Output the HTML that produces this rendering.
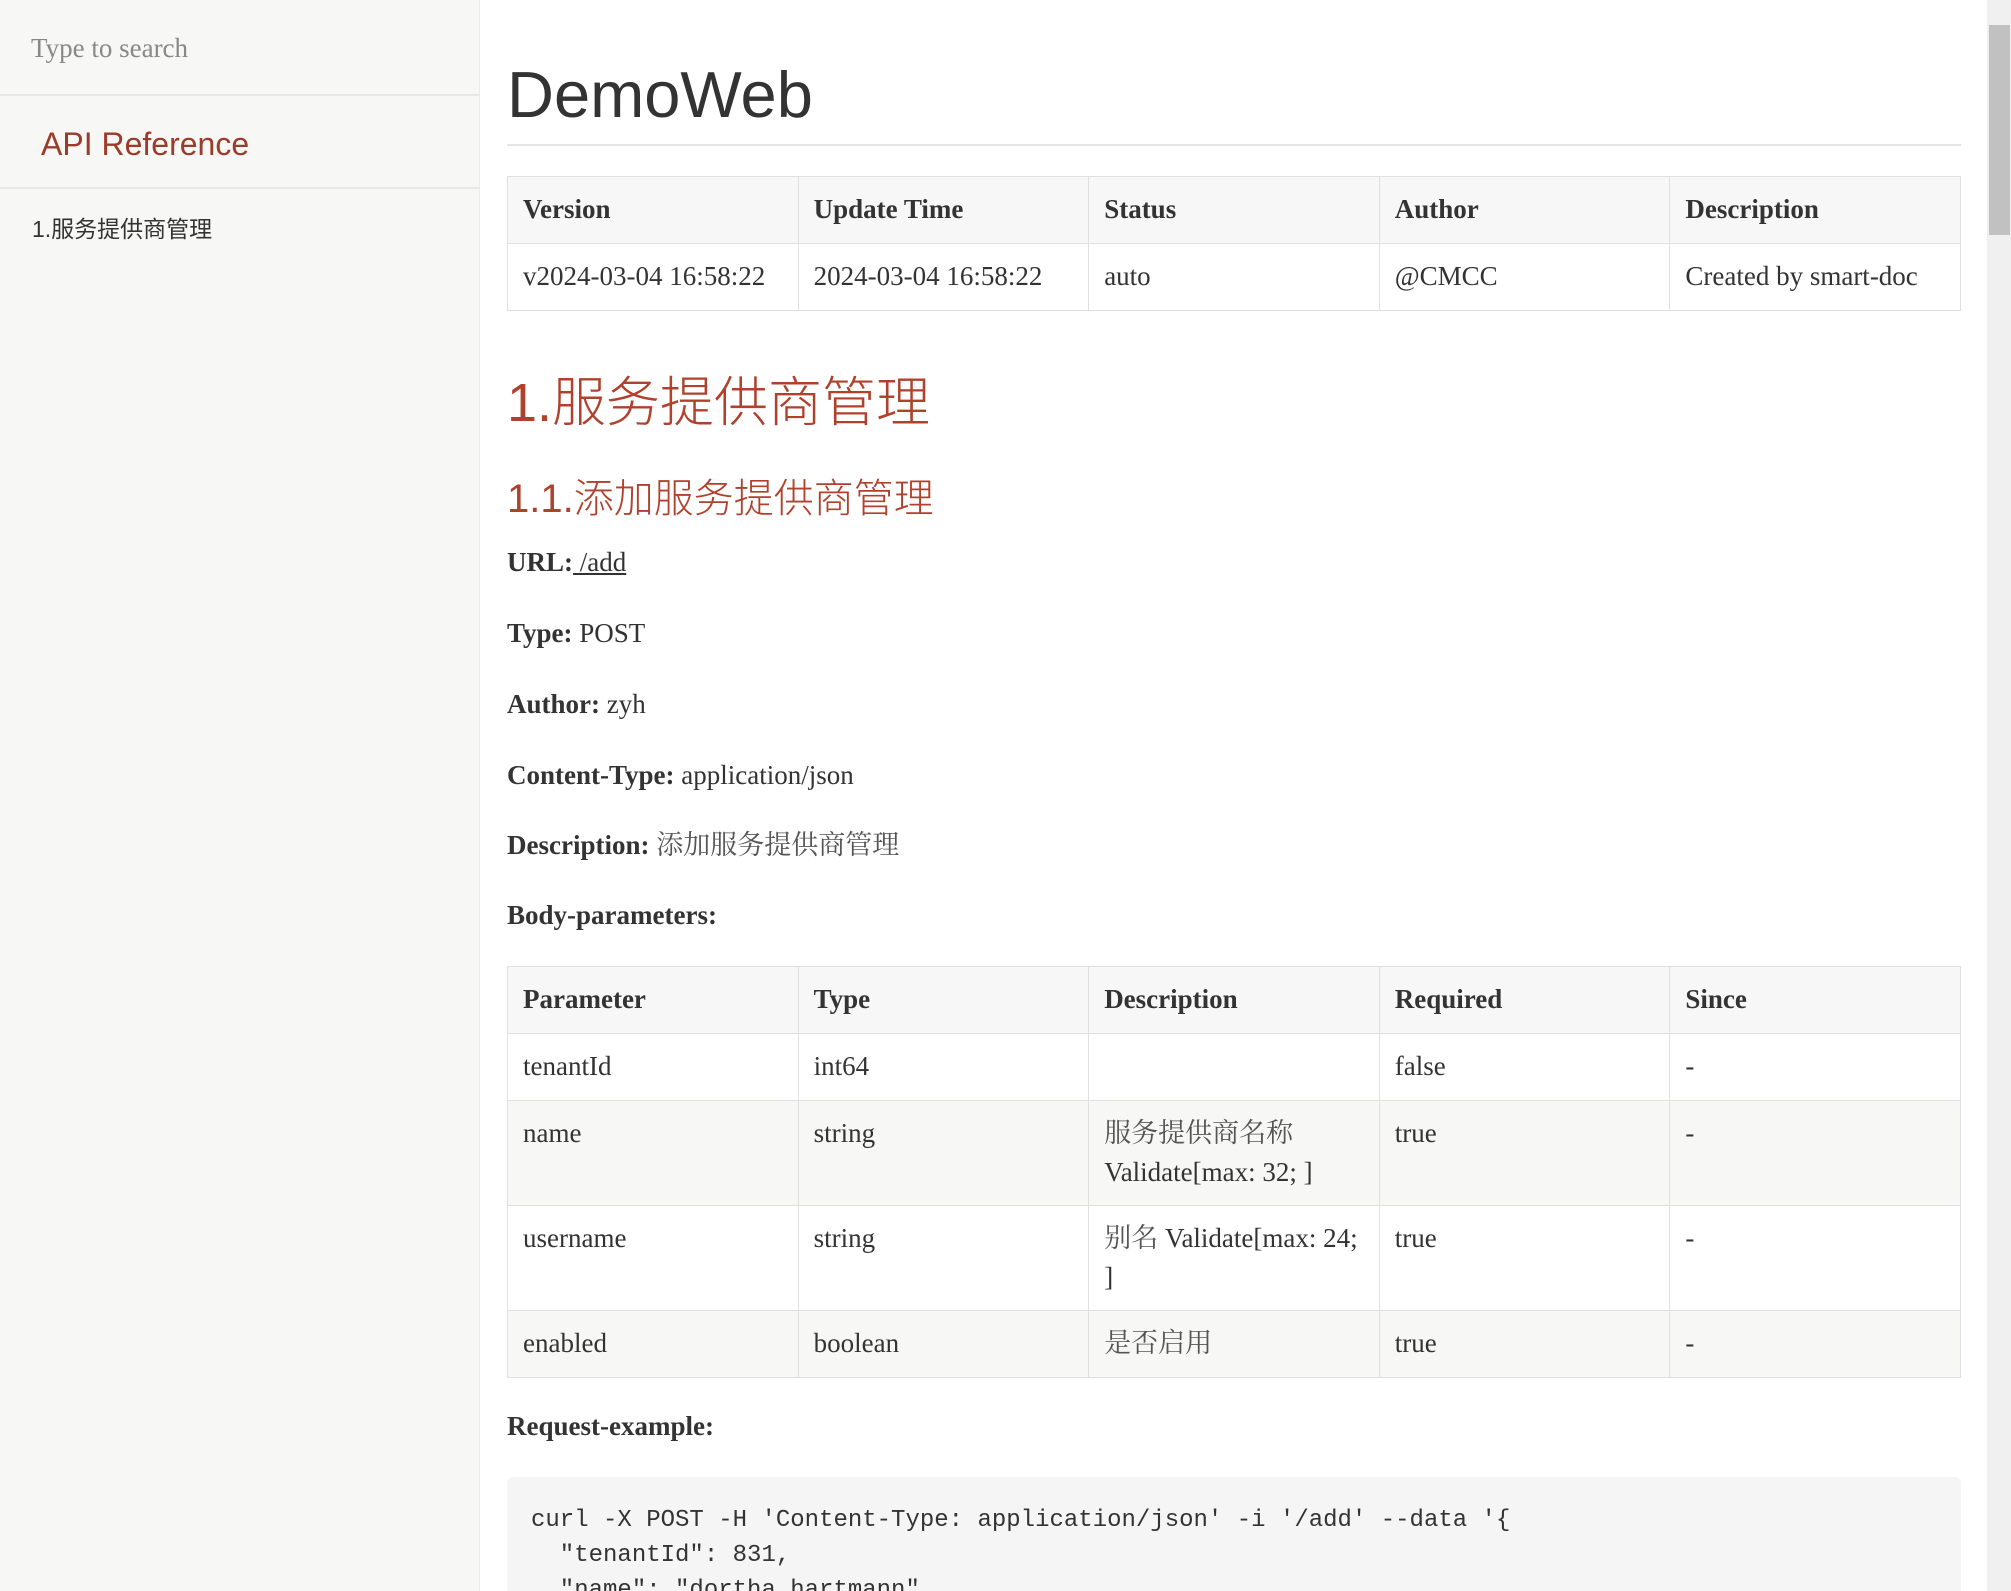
<!DOCTYPE html>
<html><head><meta charset="utf-8"><style>
*{margin:0;padding:0;box-sizing:border-box}
html,body{width:2011px;height:1591px;overflow:hidden;background:#fff;color:#333}
body{position:relative;font-family:"Liberation Serif","Noto Serif CJK SC",serif}
.side{position:absolute;left:0;top:0;width:480px;height:1591px;background:#f7f7f5;border-right:1px solid #ececea}
.search{position:absolute;left:31px;top:33px;font-size:27px;color:#888}
.hr1{position:absolute;left:0;top:94px;width:480px;border-top:2px solid #e8e8e6}
.api{position:absolute;left:41px;top:126px;font-family:"Liberation Sans",sans-serif;font-size:32px;color:#9b3b2a;font-weight:300}
.hr2{position:absolute;left:0;top:187px;width:480px;border-top:2px solid #e8e8e6}
.nav{position:absolute;left:32px;top:210px;font-family:"Liberation Sans","Noto Sans CJK SC",sans-serif;font-size:23px;color:#333}
.main{position:absolute;left:507px;top:0;width:1454px}
.ab{position:absolute;left:0}
h1.t{font-family:"Liberation Sans",sans-serif;font-weight:400;font-size:65px;color:#333;top:57px}
.hr3{top:144px;width:1454px;border-top:2px solid #e5e5e3}
table{border-collapse:collapse;width:1454px;table-layout:fixed;font-size:27px}
td,th{border:1.5px solid #e0e0e0;padding:0 15px;text-align:left;vertical-align:top}
th{background:#f7f7f7;font-weight:bold;height:67px;vertical-align:middle;padding-bottom:2px}
td{height:67px;padding-top:13px;line-height:39px}
tr.s td{background:#f7f7f5}
.cn{color:#555}
.h1c{font-family:"Liberation Sans","Noto Sans CJK SC",sans-serif;font-weight:300;color:#b0412c;font-size:54px;top:358px}
.h2c{font-family:"Liberation Sans","Noto Sans CJK SC",sans-serif;font-weight:300;color:#b0412c;font-size:40px;top:466px}
.lbl{font-size:27px;line-height:36px;height:36px}
.lbl b{font-weight:bold}
.code{top:1477px;width:1454px;height:130px;background:#f5f5f5;border-radius:6px;padding:26px 0 0 24px;font-family:"Liberation Mono",monospace;font-size:24px;line-height:35px;white-space:pre;color:#333}
.sb{position:absolute;left:1987px;top:0;width:24px;height:1591px;background:#f0f0f0}
.th{position:absolute;left:1989px;top:25px;width:21px;height:210px;background:#c1c1c1}
</style></head><body>
<div class="side">
<div class="search">Type to search</div>
<div class="hr1"></div>
<div class="api">API Reference</div>
<div class="hr2"></div>
<div class="nav">1.服务提供商管理</div>
</div>
<div class="main">
<h1 class="ab t">DemoWeb</h1>
<div class="ab hr3"></div>
<table class="ab" style="top:176px">
<tr><th>Version</th><th>Update Time</th><th>Status</th><th>Author</th><th>Description</th></tr>
<tr><td>v2024-03-04 16:58:22</td><td>2024-03-04 16:58:22</td><td>auto</td><td>@CMCC</td><td>Created by smart-doc</td></tr>
</table>
<div class="ab h1c">1.服务提供商管理</div>
<div class="ab h2c">1.1.添加服务提供商管理</div>
<div class="ab lbl" style="top:544px"><b>URL:</b><u> /add</u></div>
<div class="ab lbl" style="top:615px"><b>Type:</b> POST</div>
<div class="ab lbl" style="top:686px"><b>Author:</b> zyh</div>
<div class="ab lbl" style="top:757px"><b>Content-Type:</b> application/json</div>
<div class="ab lbl" style="top:827px"><b>Description:</b> <span class="cn">添加服务提供商管理</span></div>
<div class="ab lbl" style="top:897px"><b>Body-parameters:</b></div>
<table class="ab" style="top:966px">
<tr><th>Parameter</th><th>Type</th><th>Description</th><th>Required</th><th>Since</th></tr>
<tr><td>tenantId</td><td>int64</td><td></td><td>false</td><td>-</td></tr>
<tr class="s"><td style="height:105px">name</td><td>string</td><td><span class="cn">服务提供商名称</span><br>Validate[max: 32; ]</td><td>true</td><td>-</td></tr>
<tr><td style="height:105px">username</td><td>string</td><td><span class="cn">别名</span> Validate[max: 24;<br>]</td><td>true</td><td>-</td></tr>
<tr class="s"><td>enabled</td><td>boolean</td><td class="cn">是否启用</td><td>true</td><td>-</td></tr>
</table>
<div class="ab lbl" style="top:1408px"><b>Request-example:</b></div>
<div class="ab code">curl -X POST -H 'Content-Type: application/json' -i '/add' --data '{
  "tenantId": 831,
  "name": "dortha.hartmann",</div>
</div>
<div class="sb"></div><div class="th"></div>
</body></html>
